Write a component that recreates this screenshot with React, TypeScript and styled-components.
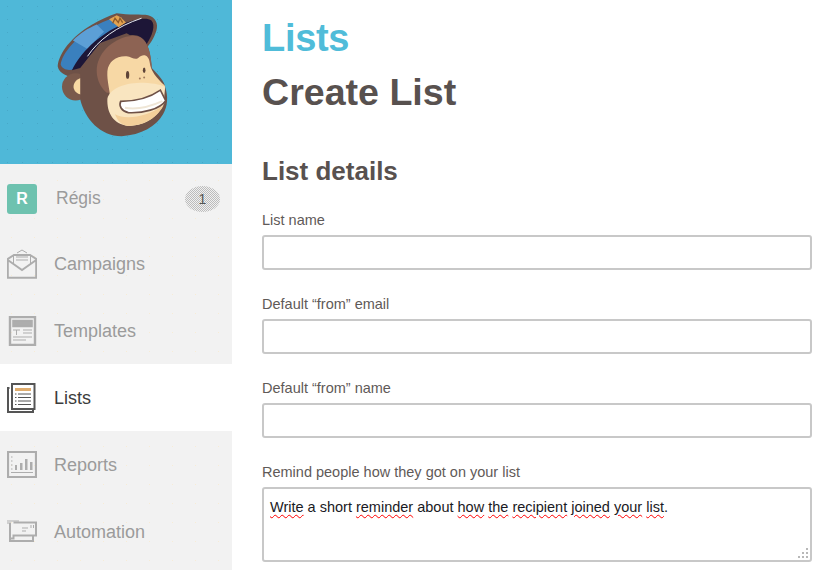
import styled, { createGlobalStyle } from "styled-components";

const GlobalStyle = createGlobalStyle`
  html, body {
    margin: 0;
    padding: 0;
    background: #fff;
    font-family: "Liberation Sans", Arial, sans-serif;
  }
`;

const Page = styled.div`
  display: flex;
  width: 831px;
  height: 570px;
  overflow: hidden;
`;

const Sidebar = styled.aside`
  flex: 0 0 232px;
  background-color: #f2f2f2;
  background-image: radial-gradient(#f7ecd6 0.6px, transparent 0.8px);
  background-size: 23px 19px;
`;

const Banner = styled.div`
  height: 164px;
  background-color: #4fb8d8;
  background-image: radial-gradient(#47a8c8 0.6px, transparent 0.8px);
  background-size: 15px 13px;
`;

const MonkeySvg = styled.svg`
  display: block;
  width: 232px;
  height: 164px;
`;

const ProfileRow = styled.div`
  box-sizing: border-box;
  display: flex;
  align-items: center;
  height: 66px;
  padding: 4px 12px 0 7px;
`;

const Avatar = styled.div`
  display: flex;
  align-items: center;
  justify-content: center;
  width: 30px;
  height: 30px;
  border-radius: 3px;
  background: #6ec2af;
  color: #fff;
  font-size: 16px;
  font-weight: 700;
`;

const ProfileName = styled.span`
  flex: 1;
  margin: -2px 0 0 19px;
  color: #9b9b9b;
  font-size: 17.5px;
`;

const Badge = styled.span`
  display: flex;
  align-items: center;
  justify-content: center;
  width: 35px;
  height: 26px;
  border-radius: 50%;
  background: repeating-conic-gradient(#bcbcbc 0 25%, #f0f0f0 0 50%) 0 0 / 2px 2px;
  color: #555;
  font-size: 14px;
`;

const NavList = styled.nav`
  display: flex;
  flex-direction: column;
`;

const NavItem = styled.a<{ $active?: boolean }>`
  box-sizing: border-box;
  display: flex;
  align-items: center;
  height: 67px;
  padding: 1px 0 0 7px;
  background: ${(p) => (p.$active ? "#fff" : "transparent")};
  color: ${(p) => (p.$active ? "#3c3c3c" : "#9b9b9b")};
  font-size: 18px;
  text-decoration: none;
`;

const NavIcon = styled.svg`
  flex: 0 0 30px;
  width: 30px;
  height: 30px;
  margin-right: 17px;
  fill: none;
  stroke: #adadad;
  stroke-width: 1.6;
`;

const Main = styled.main`
  flex: 1;
  padding: 15px 19px 0 30px;
`;

const Section = styled.h1`
  margin: 0;
  color: #50bcd9;
  font-size: 38px;
  line-height: 46px;
  font-weight: 700;
  letter-spacing: -0.3px;
`;

const Title = styled.h2`
  margin: 8px 0 0;
  color: #58514f;
  font-size: 37.6px;
  line-height: 46px;
  font-weight: 700;
`;

const SubTitle = styled.h3`
  margin: 40px 0 0;
  color: #58514f;
  font-size: 26px;
  line-height: 32px;
  font-weight: 700;
`;

const Form = styled.form`
  display: flex;
  flex-direction: column;
  gap: 25px;
  margin-top: 24px;
`;

const Field = styled.div`
  display: flex;
  flex-direction: column;
  gap: 6px;
`;

const Label = styled.label`
  color: #5f5a58;
  font-size: 14.5px;
  line-height: 18px;
`;

const Input = styled.input`
  box-sizing: border-box;
  width: 550px;
  height: 35px;
  border: 2px solid #c8c8c8;
  border-radius: 3px;
  background: #fff;
  outline: none;
`;

const TextBox = styled.div`
  position: relative;
  box-sizing: border-box;
  width: 550px;
  height: 75px;
  padding: 9px 6px;
  border: 2px solid #c8c8c8;
  border-radius: 3px;
  color: #1a1a24;
  font-size: 14.5px;
  line-height: 18px;
`;

const Misspelt = styled.span`
  text-decoration: underline wavy #f00 1px;
  text-underline-offset: 2px;
`;

const Grip = styled.svg`
  position: absolute;
  right: 1px;
  bottom: 1px;
  width: 12px;
  height: 12px;
  fill: #b8b8b8;
`;

const Monkey = () => (
  <MonkeySvg viewBox="0 0 696 495">
    {/* hat */}
    <path
      d="M172 200C176 160 215 110 275 75C300 60 325 48 350 40C385 46 425 42 445 46C468 52 476 72 470 92C462 118 450 132 440 145L225 240C205 228 176 225 172 200Z"
      fill="#6e5147"
    />
    <path
      d="M181 195C186 160 225 115 280 82C300 70 318 62 335 56L372 70L300 120L222 208C208 214 186 212 181 195Z"
      fill="#3a80be"
    />
    <path d="M218 122C240 100 262 86 290 74L312 96C296 110 280 128 266 150Z" fill="#5c9fd6" />
    <path
      d="M215 212C240 160 295 105 370 72C400 60 440 50 455 62C468 75 458 108 440 134L380 100L300 130L240 205Z"
      fill="#1d1637"
    />
    <path d="M262 170C295 120 350 80 425 55" fill="none" stroke="#e8edf2" strokeWidth="3" />
    <path d="M327 58L350 46L362 52L378 68L356 82Z" fill="#e2a24f" />
    <path d="M338 70L345 55L355 68L360 55L368 68" fill="none" stroke="#8c5a2b" strokeWidth="4" />
    {/* head */}
    <circle cx="226" cy="262" r="41" fill="#7a5a4c" />
    <path d="M256 234C232 232 218 250 220 264C222 278 236 288 256 286Z" fill="#f8d9a3" />
    <path
      d="M240 225C255 165 320 112 395 106C435 104 452 140 456 205C475 225 495 245 497 265C505 290 505 320 490 345C470 380 425 408 365 411C300 410 255 360 240 300Z"
      fill="#6e5147"
    />
    <path
      d="M290 205C295 155 345 112 398 108C435 106 452 140 456 205L420 280L320 280C296 260 288 230 290 205Z"
      fill="#8d6353"
    />
    {/* face */}
    <path
      d="M322 215C325 185 350 168 380 170C395 172 405 182 415 175C430 160 447 165 450 190C452 212 470 235 495 258C500 270 490 278 475 282L330 296C330 270 320 245 322 215Z"
      fill="#f7d8a5"
    />
    <path
      d="M322 298C330 268 370 252 420 250C455 250 480 255 495 262C498 275 490 290 497 305C480 345 445 380 385 380C340 375 320 340 322 298Z"
      fill="#f9e5c0"
    />
    <path d="M345 345C375 362 440 355 492 318C475 350 440 380 385 380C365 378 352 365 345 345Z" fill="#f3cf9a" />
    <ellipse cx="383" cy="226" rx="5" ry="12" fill="#5e4438" />
    <ellipse cx="433" cy="212" rx="4" ry="8" fill="#5e4438" />
    <circle cx="420" cy="237" r="3" fill="#a07a5c" />
    <circle cx="433" cy="234" r="3" fill="#a07a5c" />
    {/* smile */}
    <path
      d="M362 306C400 306 445 298 482 272L498 304C480 330 430 342 385 340C365 336 356 320 362 306Z"
      fill="#fff"
      stroke="#6e5147"
      strokeWidth="5"
    />
    <path d="M375 325C410 332 450 322 488 305" fill="none" stroke="#efe6d6" strokeWidth="6" />
  </MonkeySvg>
);

const CampaignsIcon = () => (
  <NavIcon viewBox="0 0 30 30">
    <path d="M.8 10V28.8H29.2V10L23 6H7ZM.8 11 15 21 29.2 11" strokeWidth="2" />
    <path d="M6.5 7V15M23.5 7V15M10 4 15 1 20 4M9 8H21M9 11H21" strokeWidth="1" />
  </NavIcon>
);

const TemplatesIcon = () => (
  <NavIcon viewBox="0 0 30 30">
    <path d="M3 1H28V29H3Z" strokeWidth="2.4" />
    <path d="M6 4.5H25V10.5H6Z" fill="#adadad" />
    <path d="M6 14H13M9.5 14V19M16 14H25M16 17H25M6 21H25M6 24H19" strokeWidth="1" />
  </NavIcon>
);

const ListsIcon = () => (
  <NavIcon viewBox="0 0 30 30">
    <path d="M2.5 5H1V29H26V27" stroke="#555" strokeWidth="2" />
    <path d="M5 1H27.5V26H5Z" stroke="#555" strokeWidth="2" />
    <path d="M8 5H24V8H8Z" fill="#e0ad6e" stroke="none" />
    <path
      d="M8 11H9.5M11 11H24M8 14.5H9.5M11 14.5H24M8 18H9.5M11 18H24M8 21.5H9.5M11 21.5H24"
      stroke="#555"
      strokeWidth="1"
    />
  </NavIcon>
);

const ReportsIcon = () => (
  <NavIcon viewBox="0 0 30 30">
    <path d="M1 2H29V27H1Z" strokeWidth="2.2" />
    <path d="M4 22.5H26" strokeWidth="1" />
    <path
      d="M8 15H10V20H8ZM13 13H15.5V20H13ZM18 9H20.5V20H18ZM23 12H25.5V20H23Z"
      fill="#adadad"
      stroke="none"
    />
    <path d="M4 7H5.5M4 11H5.5M4 15H5.5M4 19H5.5" strokeWidth="1" />
  </NavIcon>
);

const AutomationIcon = () => (
  <NavIcon viewBox="0 0 30 30">
    <path d="M0 4H12M0 6H4" strokeWidth="1" />
    <path d="M3 6V24H26V19" strokeWidth="2" />
    <path d="M6.5 5.5H29V18.5H6.5V21.5H3" strokeWidth="2" />
    <path d="M15 11H21M15 14H19M24 8V11M26.5 8V11" strokeWidth="1" />
  </NavIcon>
);

const fields = ["List name", "Default “from” email", "Default “from” name"];

const App = () => {
  return (
    <Page>
      <GlobalStyle />
      <Sidebar>
        <Banner>
          <Monkey />
        </Banner>
        <ProfileRow>
          <Avatar>R</Avatar>
          <ProfileName>Régis</ProfileName>
          <Badge>1</Badge>
        </ProfileRow>
        <NavList>
          <NavItem>
            <CampaignsIcon />
            Campaigns
          </NavItem>
          <NavItem>
            <TemplatesIcon />
            Templates
          </NavItem>
          <NavItem $active>
            <ListsIcon />
            Lists
          </NavItem>
          <NavItem>
            <ReportsIcon />
            Reports
          </NavItem>
          <NavItem>
            <AutomationIcon />
            Automation
          </NavItem>
        </NavList>
      </Sidebar>
      <Main>
        <Section>Lists</Section>
        <Title>Create List</Title>
        <SubTitle>List details</SubTitle>
        <Form>
          {fields.map((label) => (
            <Field key={label}>
              <Label>{label}</Label>
              <Input type="text" />
            </Field>
          ))}
          <Field>
            <Label>Remind people how they got on your list</Label>
            <TextBox>
              <Misspelt>Write</Misspelt> a short <Misspelt>reminder</Misspelt> about{" "}
              <Misspelt>how</Misspelt> <Misspelt>the</Misspelt> <Misspelt>recipient</Misspelt>{" "}
              <Misspelt>joined</Misspelt> <Misspelt>your</Misspelt> <Misspelt>list</Misspelt>.
              <Grip viewBox="0 0 12 12">
                <path d="M9 1H11V3H9ZM5 5H7V7H5ZM9 5H11V7H9ZM1 9H3V11H1ZM5 9H7V11H5ZM9 9H11V11H9Z" />
              </Grip>
            </TextBox>
          </Field>
        </Form>
      </Main>
    </Page>
  );
};

export default App;
